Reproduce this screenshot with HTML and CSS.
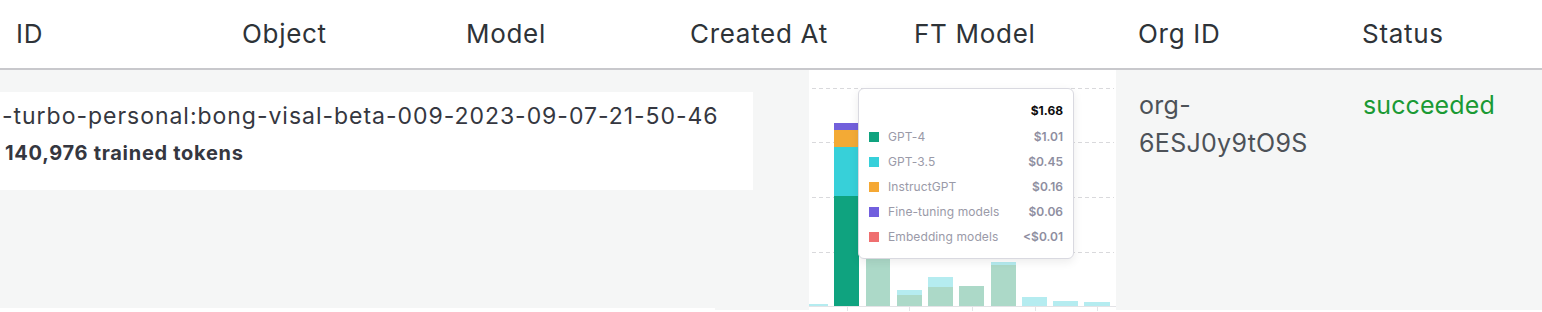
FILE: index.html
```html
<!DOCTYPE html>
<html lang="en">
<head>
<meta charset="utf-8">
<title>Fine-tunes</title>
<link rel="stylesheet" href="styles.css">
</head>
<body>
<div class="table">
  <div class="thead">
    <div class="th">ID</div>
    <div class="th">Object</div>
    <div class="th">Model</div>
    <div class="th">Created At</div>
    <div class="th">FT Model</div>
    <div class="th">Org ID</div>
    <div class="th">Status</div>
  </div>
  <div class="trow">
    <div class="idbox">
      <div class="model-id">-turbo-personal:bong-visal-beta-009-2023-09-07-21-50-46</div>
      <div class="tokens">140,976 trained tokens</div>
    </div>
    <div class="chart">
      <svg class="chart-svg" width="307" height="242" viewBox="0 0 307 242">
        <g class="grid">
          <line x1="3" y1="18.5" x2="305" y2="18.5"/>
          <line x1="3" y1="72.5" x2="305" y2="72.5"/>
          <line x1="3" y1="127.5" x2="305" y2="127.5"/>
          <line x1="3" y1="182.5" x2="305" y2="182.5"/>
        </g>
        <rect x="0" y="234" width="19" height="2" fill="#b5ecf0"/>
        <rect x="25" y="53" width="25" height="7" fill="#7260db"/>
        <rect x="25" y="60" width="25" height="17" fill="#f3aa35"/>
        <rect x="25" y="77" width="25" height="49" fill="#37d0d9"/>
        <rect x="25" y="126" width="25" height="110" fill="#0fa37f"/>
        <rect x="57" y="175" width="24" height="61" fill="#acd9c8"/>
        <rect x="88" y="220" width="25" height="5" fill="#b5ecf0"/>
        <rect x="88" y="225" width="25" height="11" fill="#acd9c8"/>
        <rect x="119" y="207" width="25" height="10" fill="#b5ecf0"/>
        <rect x="119" y="217" width="25" height="19" fill="#acd9c8"/>
        <rect x="150" y="216" width="25" height="20" fill="#acd9c8"/>
        <rect x="182" y="192" width="25" height="3" fill="#b5ecf0"/>
        <rect x="182" y="195" width="25" height="41" fill="#acd9c8"/>
        <rect x="213" y="227" width="25" height="9" fill="#b5ecf0"/>
        <rect x="244" y="231" width="25" height="5" fill="#b5ecf0"/>
        <rect x="275" y="232" width="26" height="4" fill="#b5ecf0"/>
        <g class="axis">
          <line x1="0" y1="236.5" x2="307" y2="236.5"/>
          <line x1="38.5" y1="237" x2="38.5" y2="241"/>
          <line x1="100.5" y1="237" x2="100.5" y2="241"/>
          <line x1="163.5" y1="237" x2="163.5" y2="241"/>
          <line x1="226.5" y1="237" x2="226.5" y2="241"/>
          <line x1="288.5" y1="237" x2="288.5" y2="241"/>
        </g>
      </svg>
      <div class="tooltip">
        <div class="tt-total">$1.68</div>
        <div class="tt-row"><span class="sw sw-gpt4"></span><span class="tt-label">GPT-4</span><span class="tt-val">$1.01</span></div>
        <div class="tt-row"><span class="sw sw-gpt35"></span><span class="tt-label">GPT-3.5</span><span class="tt-val">$0.45</span></div>
        <div class="tt-row"><span class="sw sw-instruct"></span><span class="tt-label">InstructGPT</span><span class="tt-val">$0.16</span></div>
        <div class="tt-row"><span class="sw sw-ft"></span><span class="tt-label">Fine-tuning models</span><span class="tt-val">$0.06</span></div>
        <div class="tt-row"><span class="sw sw-emb"></span><span class="tt-label">Embedding models</span><span class="tt-val">&lt;$0.01</span></div>
      </div>
    </div>
    <div class="td org">org-<br>6ESJ0y9tO9S</div>
    <div class="td status">succeeded</div>
  </div>
  <div class="next-row"></div>
</div>
</body>
</html>
```

FILE: styles.css
```css
* { box-sizing: border-box; }
html, body { margin: 0; padding: 0; background: #ffffff; }
body {
  font-family: Inter, "Liberation Sans", sans-serif;
  color: #2e3338;
  width: 1542px;
  height: 312px;
  overflow: hidden;
}
.table { width: 1568px; }
.thead {
  display: flex;
  height: 70px;
  border-bottom: 2px solid #c8c8cc;
  align-items: center;
  background: #fff;
}
.th {
  width: 224px;
  flex-shrink: 0;
  padding-left: 18px;
  font-size: 26px;
  letter-spacing: 0.7px;
  color: #2e3338;
  padding-bottom: 1px;
}
.th:first-child { padding-left: 16px; }
.trow {
  display: flex;
  align-items: flex-start;
  background: #f5f6f6;
  height: 240px;
}
.idbox {
  width: 753px;
  flex-shrink: 0;
  height: 98px;
  margin-top: 22px;
  background: #ffffff;
  padding: 9px 0 0 2px;
}
.model-id {
  font-size: 23px;
  line-height: 30px;
  color: #353740;
  white-space: nowrap;
  letter-spacing: 0.97px;
}
.tokens {
  font-size: 20px;
  font-weight: 700;
  line-height: 26px;
  margin-top: 9px;
  padding-left: 3px;
  letter-spacing: 0.7px;
  color: #353740;
}
.chart {
  position: relative;
  width: 307px;
  flex-shrink: 0;
  height: 242px;
  margin-left: 56px;
  background: #ffffff;
}
.chart-svg { display: block; }
.grid line {
  stroke: #d9d9dc;
  stroke-width: 1;
  stroke-dasharray: 4 3;
}
.axis line { stroke: #e3e3e6; stroke-width: 1; }
.tooltip {
  position: absolute;
  left: 49px;
  top: 18px;
  width: 216px;
  height: 171px;
  background: #ffffff;
  border: 1px solid #d9d9e0;
  border-radius: 6px;
  box-shadow: 0 3px 10px rgba(0, 0, 0, 0.08);
  padding: 13px 10px 0 10px;
  font-size: 12px;
}
.tt-total {
  text-align: right;
  font-weight: 700;
  color: #0d0d0d;
  line-height: 18px;
  height: 22px;
}
.tt-row {
  display: flex;
  align-items: center;
  height: 25px;
}
.sw {
  width: 10px;
  height: 10px;
  margin-right: 9px;
  flex-shrink: 0;
}
.sw-gpt4 { background: #10a37f; }
.sw-gpt35 { background: #36d0da; }
.sw-instruct { background: #f5a834; }
.sw-ft { background: #715fde; }
.sw-emb { background: #ef6f70; }
.tt-label { flex: 1; color: #9a9aa8; letter-spacing: 0.1px; }
.tt-val { color: #8e8ea0; font-weight: 600; }
.td {
  font-size: 25px;
  line-height: 38px;
  padding-top: 16px;
  flex-shrink: 0;
  letter-spacing: 0.3px;
}
.org {
  margin-left: 23px;
  width: 224px;
  color: #4d5258;
}
.status {
  color: #1a9a34;
  letter-spacing: 0.1px;
}
.next-row {
  width: 715px;
  height: 4px;
  background: #ffffff;
  margin-top: -2px;
  position: relative;
}
```
